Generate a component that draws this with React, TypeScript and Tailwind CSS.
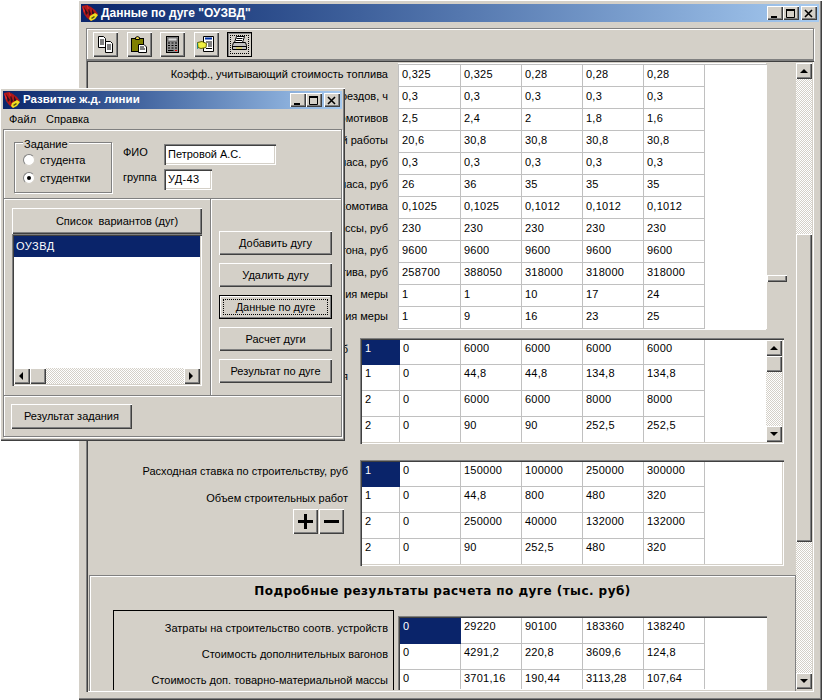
import type { ReactNode } from 'react';

const raised = 'bg-[#d4d0c8] shadow-[inset_1px_1px_0_#ffffff,inset_-1px_-1px_0_#404040,inset_-2px_-2px_0_#808080]';
const sunken = 'shadow-[inset_1px_1px_0_#808080,inset_2px_2px_0_#404040,inset_-1px_-1px_0_#ffffff,inset_-2px_-2px_0_#d4d0c8]';
const frame = 'bg-[#d4d0c8] shadow-[inset_1px_1px_0_#ffffff,inset_-1px_-1px_0_#404040,inset_-2px_-2px_0_#808080]';
const track = 'bg-[repeating-conic-gradient(#ffffff_0_25%,#d4d0c8_0_50%)] bg-size-[2px_2px]';

function AppIcon() {
  return (
    <svg width="17" height="17" viewBox="0 0 17 17" className="shrink-0">
      <path d="M0 1 L5 0 L9 2 L13 5 L16 9 L13 12 L9 16 L5 13 L2 9 Z" fill="#b01818" />
      <path d="M2 2 L6 8 L4 10 Z M6 1 L9 9 L7 11 Z M10 4 L13 9 L10 9 Z" fill="#34101c" />
      <path d="M0 1 L3 6 L2 8 Z M5 0 L7 3 L6 5 Z" fill="#f02828" />
      <path d="M8 11 L13 8 L16 10 L13 14 L9 16 L7 14 Z" fill="#f0e020" />
      <path d="M9 13 L12 11 L13 12 L10 14 Z" fill="#505010" />
    </svg>
  );
}

function CaptionButton({ kind }: { kind: 'min' | 'max' | 'close' }) {
  return (
    <div className={`${raised} w-[16px] h-[14px] flex items-center justify-center`}>
      <svg width="10" height="9" viewBox="0 0 10 9">
        {kind === 'min' && <rect x="1" y="7" width="6" height="2" fill="#000" />}
        {kind === 'max' && <path d="M0.5 1.5H8.5V8.5H0.5Z M0 1H9" fill="none" stroke="#000" strokeWidth="1" />}
        {kind === 'max' && <rect x="0" y="0" width="9" height="2" fill="#000" />}
        {kind === 'close' && <path d="M1 1L8 8M8 1L1 8" stroke="#000" strokeWidth="1.6" fill="none" />}
      </svg>
    </div>
  );
}

function TitleBar({ title, size }: { title: string; size: string }) {
  return (
    <div className="h-[18px] flex items-center pl-[1px] pr-[2px] bg-linear-to-r from-[#0a246a] to-[#a6caf0]">
      <AppIcon />
      <div className={`ml-[2px] flex-1 text-white font-bold whitespace-nowrap ${size}`}>{title}</div>
      <CaptionButton kind="min" />
      <CaptionButton kind="max" />
      <div className="w-[2px]" />
      <CaptionButton kind="close" />
    </div>
  );
}

function Arrow({ dir }: { dir: 'up' | 'down' | 'left' | 'right' }) {
  const d = { up: 'M4 1L8 5H0Z', down: 'M4 5L0 1H8Z', left: 'M1 4L5 0V8Z', right: 'M5 4L1 0V8Z' }[dir];
  return (
    <div className={`${raised} w-[16px] h-[16px] shrink-0 flex items-center justify-center`}>
      <svg width="8" height="8" viewBox="0 0 8 8">
        <path d={d} fill="#000" transform={dir === 'up' || dir === 'down' ? 'translate(0 1)' : undefined} />
      </svg>
    </div>
  );
}

function ToolButton({ children, active }: { children: ReactNode; active?: boolean }) {
  if (active) {
    return (
      <div className="w-[25px] h-[25px] border border-black bg-[#d4d0c8] flex items-center justify-center shadow-[inset_1px_1px_0_#808080]">
        <div className="w-[19px] h-[19px] border border-dotted border-black flex items-center justify-center">{children}</div>
      </div>
    );
  }
  return <div className={`${raised} w-[25px] h-[25px] flex items-center justify-center`}>{children}</div>;
}

function CopyIcon() {
  return (
    <svg width="17" height="17" viewBox="0 0 17 17">
      <path d="M1.5 0.5H6.5L8.5 2.5V11.5H1.5Z" fill="#fff" stroke="#000" />
      <path d="M3 4H7M3 6H7M3 8H7" stroke="#000" />
      <path d="M8.5 5.5H13.5L15.5 7.5V16.5H8.5Z" fill="#fff" stroke="#000" />
      <path d="M10 9H14M10 11H14M10 13H14" stroke="#000" />
    </svg>
  );
}

function PasteIcon() {
  return (
    <svg width="17" height="17" viewBox="0 0 17 17">
      <rect x="0.5" y="2.5" width="12" height="13" fill="#808000" stroke="#000" />
      <path d="M4.5 3.5V1.5L6.5 0.5L8.5 1.5V3.5Z" fill="#e8d040" stroke="#000" />
      <path d="M7.5 8.5H13L15.5 11V16.5H7.5Z" fill="#fff" stroke="#000" />
      <path d="M9 11H13M9 13H14" stroke="#000" />
    </svg>
  );
}

function CalcIcon() {
  return (
    <svg width="15" height="17" viewBox="0 0 15 17">
      <rect x="1.5" y="0.5" width="12" height="16" fill="#909090" stroke="#000" />
      <rect x="3" y="2" width="9" height="3" fill="#d8d8d8" stroke="#303030" strokeWidth="0.5" />
      <path d="M3 7H5M6.5 7H8.5M10 7H12M3 9.5H5M6.5 9.5H8.5M10 9.5H12M3 12H5M6.5 12H8.5M10 12H12M3 14.5H8.5" stroke="#000" />
      <path d="M10 14.5H12" stroke="#f00000" />
    </svg>
  );
}

function ReportIcon() {
  return (
    <svg width="19" height="17" viewBox="0 0 19 17">
      <path d="M6.5 0.5H16.5V15.5H6.5Z" fill="#fff" stroke="#000" />
      <path d="M8 2.5H15" stroke="#0030a0" strokeWidth="2" />
      <path d="M9 6H15M11 8H15M11 10H15M9 12.5H15" stroke="#000" />
      <path d="M0.5 6.5L5 5.5L9.5 7.5L9 11.5L4 12.5L1 11.5Z" fill="#f0f040" stroke="#606000" />
      <path d="M0 7V13" stroke="#008080" strokeWidth="1.5" />
    </svg>
  );
}

function PrintIcon() {
  return (
    <svg width="17" height="16" viewBox="0 0 17 16">
      <path d="M5.5 0.5H13.5L11.5 6.5H3.5Z" fill="#fff" stroke="#000" />
      <path d="M5.5 2.5H11.5M5 4.5H11" stroke="#000" />
      <path d="M2.5 6.5H14.5L15.5 9.5V13.5H1.5V9.5Z" fill="#c0c0c0" stroke="#000" />
      <path d="M2 10.5H15" stroke="#000" />
      <path d="M5 12H11" stroke="#e0d020" />
    </svg>
  );
}

type GridProps = {
  rows: string[][];
  widths: number[];
  rowH: number;
  firstH?: number;
  pad: string;
  selected?: number;
};

function Grid({ rows, widths, rowH, firstH, pad, selected }: GridProps) {
  return (
    <div className="flex-1 bg-white overflow-hidden tracking-[0.25px]">
      {rows.map((row, r) => (
        <div key={r} className="flex" style={{ height: r === 0 && firstH ? firstH : rowH }}>
          {row.map((cell, c) => {
            const isSel = r === 0 && c === selected;
            return (
              <div
                key={c}
                style={{ width: widths[c] }}
                className={`${pad} pl-[3px] leading-4 shrink-0 border-r border-b ${isSel ? 'bg-[#0a246a] text-white border-[#0a246a]' : 'border-[#c0c0c0]'}`}
              >
                {cell}
              </div>
            );
          })}
        </div>
      ))}
    </div>
  );
}

const wideCols = [38, 61, 61, 61, 61, 61];
const resultCols = [61, 61, 61, 61, 61];
const mainCols = [62, 61, 61, 61, 61];

const params = [
  ['Коэфф., учитывающий стоимость топлива', '0,325', '0,325', '0,28', '0,28', '0,28'],
  ['поездов, ч', '0,3', '0,3', '0,3', '0,3', '0,3'],
  ['локомотивов', '2,5', '2,4', '2', '1,8', '1,6'],
  ['ной работы', '20,6', '30,8', '30,8', '30,8', '30,8'],
  ['часа, руб', '0,3', '0,3', '0,3', '0,3', '0,3'],
  ['часа, руб', '26', '36', '35', '35', '35'],
  ['локомотива', '0,1025', '0,1025', '0,1012', '0,1012', '0,1012'],
  ['массы, руб', '230', '230', '230', '230', '230'],
  ['вагона, руб', '9600', '9600', '9600', '9600', '9600'],
  ['тива, руб', '258700', '388050', '318000', '318000', '318000'],
  ['ия меры', '1', '1', '10', '17', '24'],
  ['ия меры', '1', '9', '16', '23', '25'],
];

const track1 = [
  ['1', '0', '6000', '6000', '6000', '6000'],
  ['1', '0', '44,8', '44,8', '134,8', '134,8'],
  ['2', '0', '6000', '6000', '8000', '8000'],
  ['2', '0', '90', '90', '252,5', '252,5'],
];

const track2 = [
  ['1', '0', '150000', '100000', '250000', '300000'],
  ['1', '0', '44,8', '800', '480', '320'],
  ['2', '0', '250000', '40000', '132000', '132000'],
  ['2', '0', '90', '252,5', '480', '320'],
];

const results = [
  ['0', '29220', '90100', '183360', '138240'],
  ['0', '4291,2', '220,8', '3609,6', '124,8'],
  ['0', '3701,16', '190,44', '3113,28', '107,64'],
];

function DataWindow() {
  return (
    <div className={`${frame} absolute left-[78px] top-0 w-[744px] h-[700px] pl-[3px] pr-[3px] pt-[4px]`}>
      <TitleBar title={'Данные по дуге "ОУЗВД"'} size="text-[12px]" />

      <div className="px-[5px] mt-[6px]">
        {/* Toolbar */}
        <div className="h-[32px] flex items-center pl-[6px] gap-[8.5px] border border-[#808080] shadow-[inset_1px_1px_0_#ffffff,1px_1px_0_#ffffff]">
          <ToolButton><CopyIcon /></ToolButton>
          <ToolButton><PasteIcon /></ToolButton>
          <ToolButton><CalcIcon /></ToolButton>
          <ToolButton><ReportIcon /></ToolButton>
          <ToolButton active><PrintIcon /></ToolButton>
        </div>

        <div className={`${sunken} h-[632px] pl-[2px] pt-[2px] pr-[1px] pb-[1px] flex`}>
          <div className="w-[708px] h-full overflow-hidden pt-[1px]">
            {/* Parameters */}
            <div className="flex">
              <div className="w-[300px] shrink-0 pt-[1px]">
                {params.map((p, i) => (
                  <div key={i} className="h-[22px] text-right leading-[20px] whitespace-nowrap">{p[0]}</div>
                ))}
              </div>
              <div className="ml-[10px] w-[369px] h-[268px] pt-[1px] bg-white shadow-[inset_-1px_-1px_0_#d4d0c8]">
                <div className="border-t border-l border-[#c0c0c0]">
                  <Grid rows={params.map((p) => p.slice(1))} widths={mainCols} rowH={22} pad="pt-[1px]" />
                </div>
              </div>
              <div className={`${raised} w-[20px] h-[7px] mt-[212px] shrink-0`} />
            </div>

            {/* Track one */}
            <div className="flex mt-[7px]">
              <div className="w-[260px] shrink-0 text-right whitespace-nowrap">
                <div className="h-[27px] pt-[3px] leading-4">руб</div>
                <div className="h-[27px] pt-[3px] leading-4">ния</div>
              </div>
              <div className={`${sunken} ml-[12px] w-[424px] h-[106px] p-[2px] flex bg-white`}>
                <Grid rows={track1} widths={wideCols} rowH={26} firstH={25} pad="pt-0" selected={0} />
                <div className="w-[16px] flex flex-col">
                  <Arrow dir="up" />
                  <div className={`${raised} h-[16px]`} />
                  <div className={`flex-1 ${track}`} />
                  <Arrow dir="down" />
                </div>
              </div>
            </div>

            {/* Track two */}
            <div className="flex mt-[16px]">
              <div className="w-[260px] shrink-0 text-right whitespace-nowrap">
                <div className="h-[27px] pt-[3px] leading-4">Расходная ставка по строительству, руб</div>
                <div className="h-[22px] pt-[3px] leading-4">Объем строительных работ</div>
                <div className="flex justify-end pr-[4px] gap-[1px]">
                  <div className={`${raised} w-[25px] h-[25px] flex items-center justify-center`}>
                    <svg width="15" height="15" viewBox="0 0 15 15"><path d="M6 0H9V6H15V9H9V15H6V9H0V6H6Z" fill="#000" /></svg>
                  </div>
                  <div className={`${raised} w-[25px] h-[25px] flex items-center justify-center`}>
                    <svg width="15" height="15" viewBox="0 0 15 15"><rect x="0" y="6" width="15" height="3" fill="#000" /></svg>
                  </div>
                </div>
              </div>
              <div className={`${sunken} ml-[12px] w-[424px] h-[106px] p-[2px] bg-white flex`}>
                <Grid rows={track2} widths={wideCols} rowH={26} firstH={25} pad="pt-0" selected={0} />
              </div>
            </div>

            {/* Results */}
            <div className="ml-[1px] mt-[9px] w-[707px] h-[130px] border-t border-l border-r border-[#808080] shadow-[inset_1px_1px_0_#ffffff]">
              <div className="pt-[7px] h-[34px] text-center font-bold text-[12px] tracking-[0.45px] leading-4 font-['DejaVu_Sans',sans-serif]">
                Подробные результаты расчета по дуге (тыс. руб)
              </div>
              <div className="flex">
                <div className="ml-[23px] mt-[0px] w-[281px] h-[80px] border-t border-l border-r border-black pt-[4px] pr-[5px] text-right">
                  <div className="h-[26px] leading-[26px]">Затраты на строительство соотв. устройств</div>
                  <div className="h-[26px] leading-[26px]">Стоимость дополнительных вагонов</div>
                  <div className="h-[26px] leading-[26px]">Стоимость доп. товарно-материальной массы</div>
                </div>
                <div className={`${sunken} ml-[4px] mt-[6px] w-[369px] h-[74px] pl-[2px] pt-[2px] pb-[1px] flex bg-white`}>
                  <Grid rows={results} widths={resultCols} rowH={26} pad="pt-0" selected={0} />
                </div>
              </div>
            </div>
          </div>

          {/* Panel scrollbar */}
          <div className="w-[16px] mt-[1px] mb-[2px] flex flex-col">
            <Arrow dir="up" />
            <div className={`h-[155px] ${track}`} />
            <div className={`${raised} h-[308px]`} />
            <div className={`flex-1 ${track}`} />
            <Arrow dir="down" />
          </div>
        </div>
      </div>
    </div>
  );
}

function WinButton({ label, focused, className }: { label: string; focused?: boolean; className: string }) {
  if (focused) {
    return (
      <div className={`${className} border border-black bg-[#d4d0c8] p-[3px] shadow-[inset_-1px_-1px_0_#808080,inset_1px_1px_0_#ffffff]`}>
        <div className="h-full border border-dotted border-black flex items-center justify-center">{label}</div>
      </div>
    );
  }
  return <div className={`${raised} ${className} flex items-center justify-center`}>{label}</div>;
}

function Radio({ label, checked }: { label: string; checked?: boolean }) {
  return (
    <div className="h-[18px] flex items-center">
      <div className="w-[12px] h-[12px] rounded-full bg-white border border-t-[#808080] border-l-[#808080] border-r-[#d4d0c8] border-b-[#d4d0c8] flex items-center justify-center">
        {checked && <div className="w-[4px] h-[4px] rounded-full bg-black" />}
      </div>
      <span className="ml-[5px]">{label}</span>
    </div>
  );
}

function MainWindow() {
  return (
    <div className={`${frame} absolute left-0 top-[88px] w-[345px] h-[353px] p-[3px] pb-[4px]`}>
      <TitleBar title="Развитие ж.д. линии" size="text-[11.5px]" />
      <div className="h-[19px] mt-[1px] flex items-center pl-[6px] gap-[10px]">
        <span>Файл</span>
        <span>Справка</span>
      </div>

      <div className="border border-[#808080] shadow-[inset_1px_1px_0_#ffffff,1px_1px_0_#ffffff] h-[308px]">
        {/* Student */}
        <div className="h-[68px] flex pl-[10px] pt-[12px]">
          <div className="relative w-[98px] h-[51px] border border-[#808080] shadow-[inset_1px_1px_0_#ffffff,1px_1px_0_#ffffff] pl-[8px] pt-[8px]">
            <span className="absolute -top-[7px] left-[8px] px-[1px] leading-4 bg-[#d4d0c8]">Задание</span>
            <Radio label="студента" />
            <Radio label="студентки" checked />
          </div>
          <div className="ml-[11px] mt-[2px] flex flex-col gap-[4px]">
            <div className="flex h-[21px]">
              <span className="w-[41px] leading-4">ФИО</span>
              <div className={`${sunken} w-[112px] bg-white pl-[4px] leading-[21px]`}>Петровой А.С.</div>
            </div>
            <div className="flex h-[21px]">
              <span className="w-[41px] leading-4">группа</span>
              <div className={`${sunken} w-[48px] bg-white pl-[4px] leading-[21px] tracking-[0.3px]`}>УД-43</div>
            </div>
          </div>
        </div>

        {/* Arc list */}
        <div className="h-[197px] flex border-t border-[#808080] shadow-[inset_0_1px_0_#ffffff]">
          <div className="w-[207px] pl-[8px] pt-[9px] border-r border-[#808080] shadow-[1px_0_0_#ffffff]">
            <WinButton label="Список  вариантов (дуг)" className="w-[190px] h-[26px] pl-[20px] whitespace-pre" />
            <div className={`${sunken} w-[190px] h-[152px] p-[2px] bg-white flex flex-col`}>
              <div className="h-[21px] bg-[#0a246a] text-white pl-[2px] leading-[20px] tracking-[0.5px]">ОУЗВД</div>
              <div className="flex-1" />
              <div className="flex">
                <Arrow dir="left" />
                <div className={`${raised} w-[16px] h-[16px]`} />
                <div className={`flex-1 ${track}`} />
                <Arrow dir="right" />
              </div>
            </div>
          </div>
          <div className="pl-[8px] pt-[32px] flex flex-col gap-[8px]">
            <WinButton label="Добавить дугу" className="w-[113px] h-[24px]" />
            <WinButton label="Удалить дугу" className="w-[113px] h-[24px]" />
            <WinButton label="Данные по дуге" className="w-[113px] h-[24px]" focused />
            <WinButton label="Расчет дуги" className="w-[113px] h-[24px]" />
            <WinButton label="Результат по дуге" className="w-[113px] h-[24px]" />
          </div>
        </div>

        {/* Summary */}
        <div className="border-t border-[#808080] shadow-[inset_0_1px_0_#ffffff] pl-[7px] pt-[8px]">
          <WinButton label="Результат задания" className="w-[121px] h-[25px]" />
        </div>
      </div>
    </div>
  );
}

export default function App() {
  return (
    <div className="relative w-[823px] h-[700px] overflow-hidden bg-white text-black text-[11px] font-['Liberation_Sans',sans-serif]">
      <DataWindow />
      <MainWindow />
    </div>
  );
}
